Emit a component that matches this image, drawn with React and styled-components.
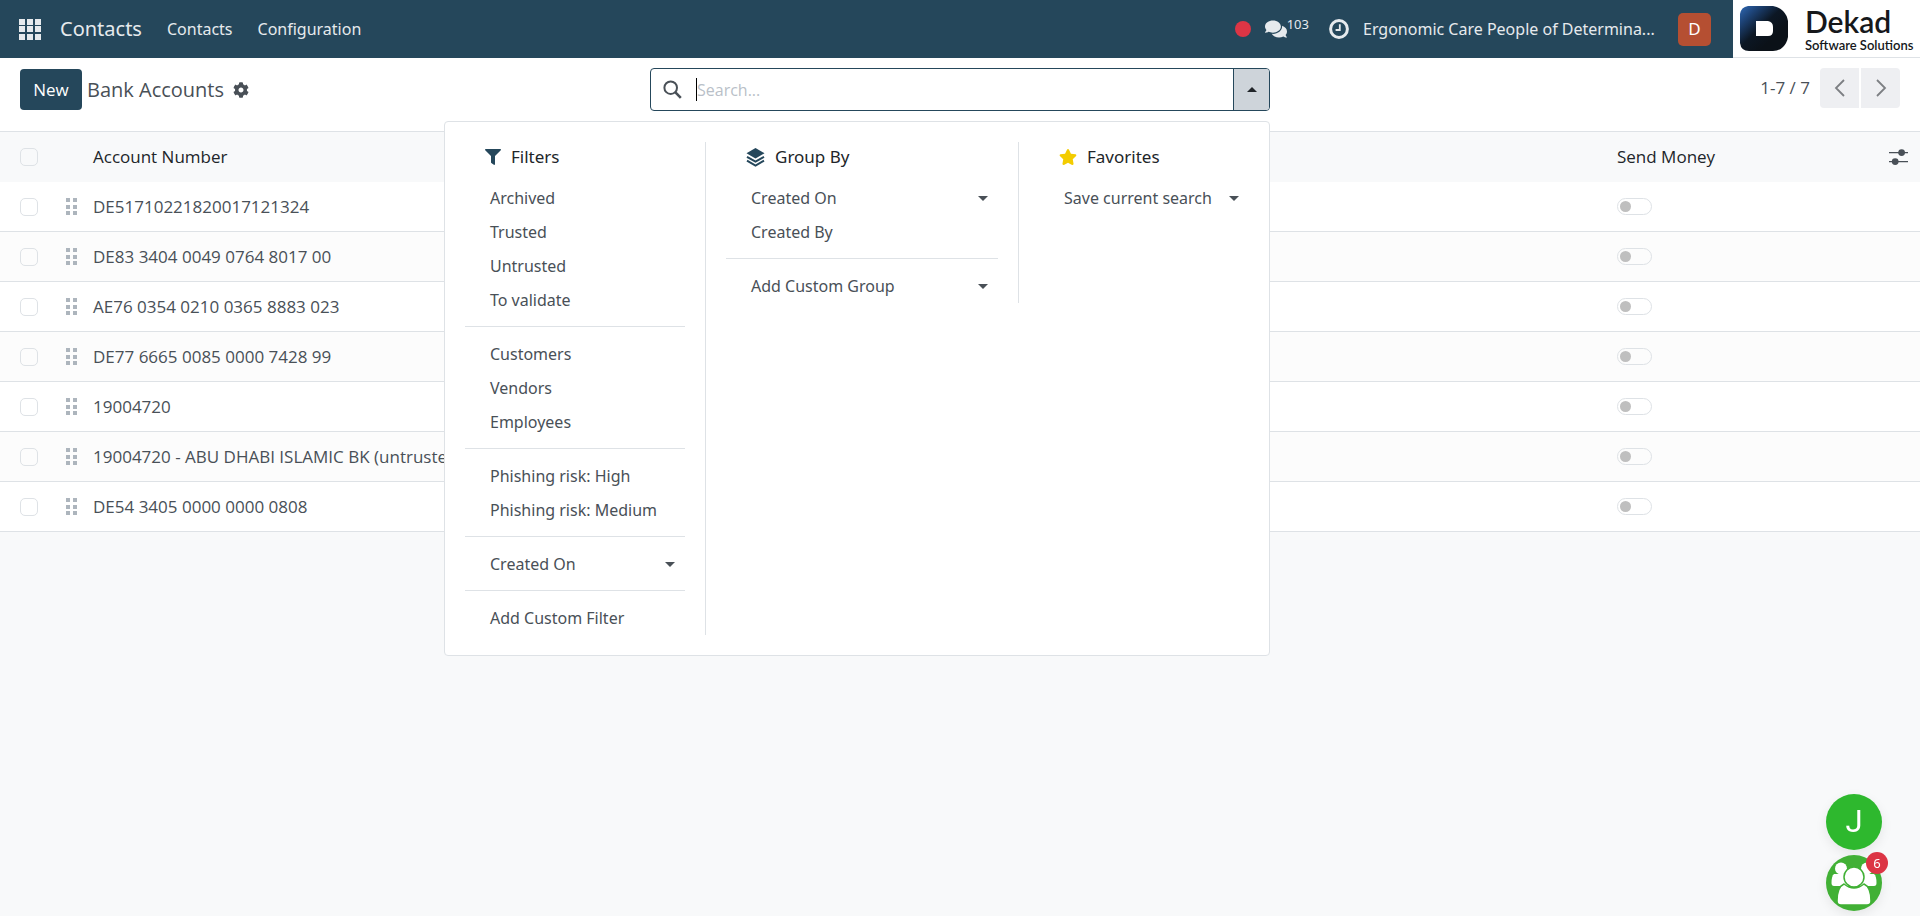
import React from "react";
import styled, { createGlobalStyle } from "styled-components";
import { FaCog, FaComments, FaFilter, FaStar } from "react-icons/fa";

const accounts = [
  "DE51710221820017121324",
  "DE83 3404 0049 0764 8017 00",
  "AE76 0354 0210 0365 8883 023",
  "DE77 6665 0085 0000 7428 99",
  "19004720",
  "19004720 - ABU DHABI ISLAMIC BK (untrusted)",
  "DE54 3405 0000 0000 0808",
];

const filterGroups = [
  [
    { label: "Archived" },
    { label: "Trusted" },
    { label: "Untrusted" },
    { label: "To validate" },
  ],
  [{ label: "Customers" }, { label: "Vendors" }, { label: "Employees" }],
  [{ label: "Phishing risk: High" }, { label: "Phishing risk: Medium" }],
  [{ label: "Created On", more: true }],
  [{ label: "Add Custom Filter" }],
];

const groupByGroups = [
  [{ label: "Created On", more: true }, { label: "Created By" }],
  [{ label: "Add Custom Group", more: true }],
];

const favoriteGroups = [[{ label: "Save current search", more: true }]];

const AppsIcon = () => (
  <svg width="22" height="21" viewBox="0 0 22 21" fill="currentColor">
    {[0, 8, 16].map((x) =>
      [0, 7, 15].map((y) => (
        <rect key={`${x}-${y}`} x={x} y={y} width="6" height="6" />
      ))
    )}
  </svg>
);

const ClockIcon = () => (
  <svg width="20" height="20" viewBox="0 0 20 20" fill="none">
    <circle cx="10" cy="10" r="8.4" stroke="currentColor" strokeWidth="3" />
    <path d="M10.8 5.2v5.8H6.6" stroke="currentColor" strokeWidth="1.8" />
  </svg>
);

const SearchIcon = () => (
  <svg width="19" height="19" viewBox="0 0 19 19" fill="none">
    <circle cx="7.7" cy="7.7" r="6.3" stroke="currentColor" strokeWidth="2" />
    <path d="M12.2 12.2l5.6 5.6" stroke="currentColor" strokeWidth="2.6" />
  </svg>
);

const LayersIcon = () => (
  <svg width="19" height="19" viewBox="0 0 19 19" fill="#25475b">
    <path d="M9.5 0L18.5 5.2 9.5 10.4.5 5.2z" />
    <path
      d="M1 8.8l8.5 4.9L18 8.8M1 12.6l8.5 4.9 8.5-4.9"
      fill="none"
      stroke="#25475b"
      strokeWidth="2"
    />
  </svg>
);

const AdjustIcon = () => (
  <svg width="20" height="16" viewBox="0 0 20 16" fill="#495057">
    <path d="M0 3h19v1.3H0zM0 12h19v1.3H0z" />
    <circle cx="12.6" cy="3.6" r="3.4" />
    <circle cx="6.2" cy="12.6" r="3.4" />
  </svg>
);

const GripIcon = () => (
  <svg width="12" height="18" viewBox="0 0 12 18" fill="#adb5bd">
    {[0, 7].map((x) =>
      [0, 7, 13].map((y) => (
        <rect key={`${x}-${y}`} x={x} y={y} width="4" height="4" />
      ))
    )}
  </svg>
);

const Chevron = ({ d }) => (
  <svg width="12" height="20" viewBox="0 0 12 20" fill="none">
    <path d={d} stroke="#7c7f83" strokeWidth="1.8" />
  </svg>
);

const LogoMark = () => (
  <svg width="48" height="45" viewBox="0 0 48 45">
    <defs>
      <linearGradient id="logoShade" x1="0" y1="0" x2="0.7" y2="0.7">
        <stop offset="0" stopColor="#2f68b4" />
        <stop offset="0.3" stopColor="#1c4173" />
        <stop offset="0.65" stopColor="#0c1724" />
        <stop offset="1" stopColor="#0b1118" />
      </linearGradient>
    </defs>
    <path
      fill="url(#logoShade)"
      d="M8 0h25q6 1 10 5t5 10v16q-1 6-5 10t-10 4H9q-8 0-9-8V8Q1 1 8 0z"
    />
    <path fill="#fff" d="M16 15h12q5 1 5 6v4q0 5-5 5H16z" />
  </svg>
);

const PeopleIcon = () => (
  <svg width="56" height="56" viewBox="0 0 56 56" fill="#fff">
    <circle cx="15" cy="13.5" r="6" />
    <circle cx="41" cy="13.5" r="6" />
    <path d="M8 19h14v12H8q-2.5 0-2.5-3 0-7 2.5-9z" />
    <path d="M48 19H34v12h14q2.5 0 2.5-3 0-7-2.5-9z" />
    <g stroke="#41b035" strokeWidth="1.5">
      <path d="M18 29q5 4 10 4t10-4q7 3 7 17 0 4-4 4H15q-4 0-4-4 0-14 7-17z" />
      <circle cx="28" cy="22" r="10" />
    </g>
  </svg>
);

const MenuColumn = ({ icon, title, groups, bordered }) => (
  <Column $bordered={bordered}>
    <ColumnTitle>
      {icon}
      {title}
    </ColumnTitle>
    {groups.map((group, index) => (
      <MenuGroup key={index}>
        {group.map((item) => (
          <MenuItem key={item.label} type="button" role="menuitem">
            {item.label}
            {item.more && <Caret />}
          </MenuItem>
        ))}
      </MenuGroup>
    ))}
  </Column>
);

const App = () => (
  <>
    <GlobalStyle />
    <Navbar>
      <NavLinks>
        <AppsButton type="button" aria-label="Home menu">
          <AppsIcon />
        </AppsButton>
        <Brand href="#contacts">Contacts</Brand>
        <NavLink href="#contacts">Contacts</NavLink>
        <NavLink href="#configuration">Configuration</NavLink>
      </NavLinks>
      <Systray>
        <StatusDot />
        <TrayButton type="button" aria-label="Messages">
          <FaComments size={22} />
          <Counter>103</Counter>
        </TrayButton>
        <TrayButton type="button" aria-label="Activities">
          <ClockIcon />
        </TrayButton>
        <Company type="button">Ergonomic Care People of Determina...</Company>
        <Avatar type="button">D</Avatar>
        <Logo>
          <LogoMark />
          <LogoText>
            <LogoName>Dekad</LogoName>
            <LogoTag>Software Solutions</LogoTag>
          </LogoText>
        </Logo>
      </Systray>
    </Navbar>

    <ControlPanel>
      <Breadcrumb>
        <NewButton type="button">New</NewButton>
        <Title>Bank Accounts</Title>
        <IconButton type="button" aria-label="Actions">
          <FaCog size={16} />
        </IconButton>
      </Breadcrumb>

      <SearchArea>
        <SearchBox>
          <SearchIcon />
          <TextCursor />
          <SearchInput
            type="text"
            placeholder="Search..."
            aria-label="Search"
          />
          <SearchToggle type="button" aria-label="Toggle search panel">
            <Caret $up />
          </SearchToggle>
        </SearchBox>
        <SearchMenu role="menu">
          <MenuColumn
            icon={<FaFilter size={16} color="#25475b" />}
            title="Filters"
            groups={filterGroups}
            bordered
          />
          <MenuColumn
            icon={<LayersIcon />}
            title="Group By"
            groups={groupByGroups}
            bordered
          />
          <MenuColumn
            icon={<FaStar size={18} color="#f3cc00" />}
            title="Favorites"
            groups={favoriteGroups}
          />
        </SearchMenu>
      </SearchArea>

      <Pager>
        <span>1-7 / 7</span>
        <PagerButtons>
          <PagerButton type="button" aria-label="Previous">
            <Chevron d="M10 2L2 10l8 8" />
          </PagerButton>
          <PagerButton type="button" aria-label="Next">
            <Chevron d="M2 2l8 8-8 8" />
          </PagerButton>
        </PagerButtons>
      </Pager>
    </ControlPanel>

    <Table>
      <colgroup>
        <col width="58" />
        <col width="35" />
        <col />
        <col width="272" />
        <col width="31" />
      </colgroup>
      <thead>
        <tr>
          <HeadCell $check>
            <Checkbox type="checkbox" aria-label="Select all" />
          </HeadCell>
          <HeadCell />
          <HeadCell>Account Number</HeadCell>
          <HeadCell>Send Money</HeadCell>
          <HeadCell>
            <IconButton type="button" aria-label="Optional columns">
              <AdjustIcon />
            </IconButton>
          </HeadCell>
        </tr>
      </thead>
      <tbody>
        {accounts.map((account) => (
          <Row key={account}>
            <Cell $check>
              <Checkbox type="checkbox" aria-label={`Select ${account}`} />
            </Cell>
            <Cell $grip>
              <GripIcon />
            </Cell>
            <Cell>{account}</Cell>
            <Cell>
              <Switch type="checkbox" aria-label={`Send money ${account}`} />
            </Cell>
            <Cell />
          </Row>
        ))}
      </tbody>
    </Table>

    <ChatHub>
      <ChatBubble type="button">J</ChatBubble>
      <ChatBubble type="button" $group aria-label="Group chat">
        <PeopleIcon />
        <Badge>6</Badge>
      </ChatBubble>
    </ChatHub>
  </>
);

const GlobalStyle = createGlobalStyle`
  *,
  *::before,
  *::after {
    box-sizing: border-box;
  }

  body {
    min-height: 100vh;
    margin: 0;
    background-color: #f8f9fa;
    color: #495057;
    font-family: "Open Sans", "Noto Sans", sans-serif;
    font-size: 17px;
    line-height: 24px;
  }

  button,
  input {
    margin: 0;
    padding: 0;
    border: none;
    background: none;
    color: inherit;
    font: inherit;
  }

  svg {
    display: block;
    flex-shrink: 0;
  }
`;

const Navbar = styled.header`
  display: flex;
  justify-content: space-between;
  height: 58px;
  background-color: #25475b;
  color: #e6eaed;
  font-family: "Noto Sans", sans-serif;
`;

const NavLinks = styled.nav`
  display: flex;
  align-items: center;
  padding-left: 19px;
`;

const AppsButton = styled.button`
  margin-right: 19px;
`;

const NavLink = styled.a`
  margin-right: 25px;
  color: inherit;
  font-size: 16px;
  text-decoration: none;
`;

const Brand = styled(NavLink)`
  font-size: 20px;
`;

const Systray = styled.div`
  display: flex;
  align-items: center;
`;

const StatusDot = styled.span`
  width: 16px;
  height: 16px;
  margin-right: 14px;
  border-radius: 50%;
  background-color: #dc3545;
`;

const TrayButton = styled.button`
  display: flex;
  align-items: center;
  margin-right: 14px;
`;

const Counter = styled.sup`
  margin: 0 6px 10px 0;
  font-size: 13px;
  line-height: 16px;
`;

const Company = styled.button`
  min-width: 299px;
  margin-right: 16px;
  font-size: 16px;
  text-align: left;
`;

const Avatar = styled.button`
  width: 33px;
  height: 33px;
  margin-right: 22px;
  border-radius: 5px;
  background-color: #b54f32;
  color: #fff;
`;

const Logo = styled.div`
  display: flex;
  align-items: center;
  gap: 17px;
  width: 187px;
  height: 58px;
  padding-left: 7px;
  border-bottom: 1px solid #dee2e6;
  background-color: #fff;
`;

const LogoText = styled.div`
  display: flex;
  flex-direction: column;
  color: #16181b;
  font-family: Lato, sans-serif;
  white-space: nowrap;
`;

const LogoName = styled.span`
  font-size: 30px;
  font-weight: 600;
  line-height: 32px;
`;

const LogoTag = styled.span`
  font-size: 13px;
  font-weight: 600;
  line-height: 16px;
`;

const ControlPanel = styled.div`
  display: grid;
  grid-template-columns: 1fr minmax(0, 620px) 1fr;
  align-items: start;
  height: 74px;
  padding: 10px 20px 0;
  border-bottom: 1px solid #dee2e6;
  background-color: #fff;
`;

const Breadcrumb = styled.div`
  display: flex;
  align-items: center;
  height: 43px;
`;

const NewButton = styled.button`
  width: 62px;
  height: 41px;
  margin-right: 5px;
  border-radius: 4px;
  background-color: #25475b;
  color: #fff;
`;

const Title = styled.span`
  margin-right: 9px;
  font-size: 20px;
`;

const IconButton = styled.button`
  display: block;
`;

const SearchArea = styled.div`
  position: relative;
`;

const SearchBox = styled.div`
  display: flex;
  align-items: center;
  height: 43px;
  padding-left: 12px;
  border: 1px solid #25475b;
  border-radius: 4px;
`;

const TextCursor = styled.span`
  width: 1px;
  height: 23px;
  margin-left: 14px;
  background-color: #000;
`;

const SearchInput = styled.input`
  flex: 1;
  min-width: 0;
  font-size: 16px;
  outline: none;

  &::placeholder {
    color: #b9bfc8;
    opacity: 1;
  }
`;

const SearchToggle = styled.button`
  display: flex;
  align-items: center;
  justify-content: center;
  width: 36px;
  height: 41px;
  border-left: 1px solid #25475b;
  border-radius: 0 3px 3px 0;
  background-color: #ced4da;
  color: #212529;
`;

const Caret = styled.span`
  border: 5px solid transparent;
  border-top: ${({ $up }) => ($up ? "none" : "5px solid currentColor")};
  border-bottom: ${({ $up }) => ($up ? "5px solid currentColor" : "none")};
`;

const SearchMenu = styled.div`
  position: absolute;
  z-index: 10;
  top: 53px;
  right: 0;
  display: grid;
  grid-template-columns: 261px 313px 250px;
  align-items: start;
  padding: 20px 0;
  border: 1px solid #dee2e6;
  border-radius: 4px;
  background-color: #fff;
  font-family: "Noto Sans", sans-serif;
`;

const Column = styled.div`
  padding: 0 20px;
  border-right: ${({ $bordered }) => ($bordered ? "1px solid #dee2e6" : "none")};
`;

const ColumnTitle = styled.div`
  display: flex;
  align-items: center;
  gap: 10px;
  height: 30px;
  margin-bottom: 9px;
  padding-left: 20px;
  color: #212529;
`;

const MenuGroup = styled.div`
  & + & {
    margin-top: 9px;
    padding-top: 10px;
    border-top: 1px solid #dee2e6;
  }
`;

const MenuItem = styled.button`
  display: flex;
  align-items: center;
  justify-content: space-between;
  width: 100%;
  height: 34px;
  padding: 0 10px 0 25px;
  font-size: 16px;
  white-space: nowrap;
`;

const Pager = styled.div`
  display: flex;
  align-items: center;
  justify-content: flex-end;
  gap: 10px;
  height: 40px;
`;

const PagerButtons = styled.div`
  display: flex;
  gap: 2px;
`;

const PagerButton = styled.button`
  display: flex;
  align-items: center;
  justify-content: center;
  width: 39px;
  height: 40px;
  background-color: #eeeff2;

  &:first-child {
    border-radius: 4px 0 0 4px;
  }

  &:last-child {
    border-radius: 0 4px 4px 0;
  }
`;

const Table = styled.table`
  width: 100%;
  table-layout: fixed;
  border-spacing: 0;
`;

const HeadCell = styled.th`
  height: 50px;
  padding: 0 0 0 ${({ $check }) => ($check ? 20 : 0)}px;
  color: #212529;
  font-weight: 400;
  text-align: left;
  vertical-align: middle;
`;

const Row = styled.tr`
  background-color: #fff;

  &:nth-child(even) {
    background-color: #fcfcfc;
  }
`;

const Cell = styled.td`
  height: 50px;
  padding: 0;
  padding-left: ${({ $check, $grip }) => ($check ? 20 : $grip ? 8 : 0)}px;
  border-bottom: 1px solid #dee2e6;
  white-space: nowrap;
  vertical-align: middle;
`;

const Checkbox = styled.input`
  display: block;
  appearance: none;
  width: 18px;
  height: 18px;
  border: 1px solid #dee2e6;
  border-radius: 5px;
`;

const Switch = styled.input`
  display: flex;
  align-items: center;
  appearance: none;
  width: 35px;
  height: 17px;
  padding-left: 2px;
  border: 1px solid #dee2e6;
  border-radius: 9px;

  &::before {
    content: "";
    width: 11px;
    height: 11px;
    border-radius: 50%;
    background-color: #bfbfbf;
  }
`;

const ChatHub = styled.div`
  position: fixed;
  right: 38px;
  bottom: 5px;
  display: flex;
  flex-direction: column;
  gap: 5px;
`;

const ChatBubble = styled.button`
  position: relative;
  width: 56px;
  height: 56px;
  border-radius: 50%;
  background-color: ${({ $group }) => ($group ? "#41b035" : "#2eb82e")};
  box-shadow: 0 4px 12px rgba(0, 0, 0, 0.08);
  color: #fff;
  font-family: Roboto, sans-serif;
  font-size: 31px;
`;

const Badge = styled.span`
  position: absolute;
  top: -3px;
  right: -6px;
  width: 22px;
  height: 22px;
  border-radius: 50%;
  background-color: #dc3545;
  font-family: "Noto Sans", sans-serif;
  font-size: 13px;
  line-height: 22px;
`;

export default App;
